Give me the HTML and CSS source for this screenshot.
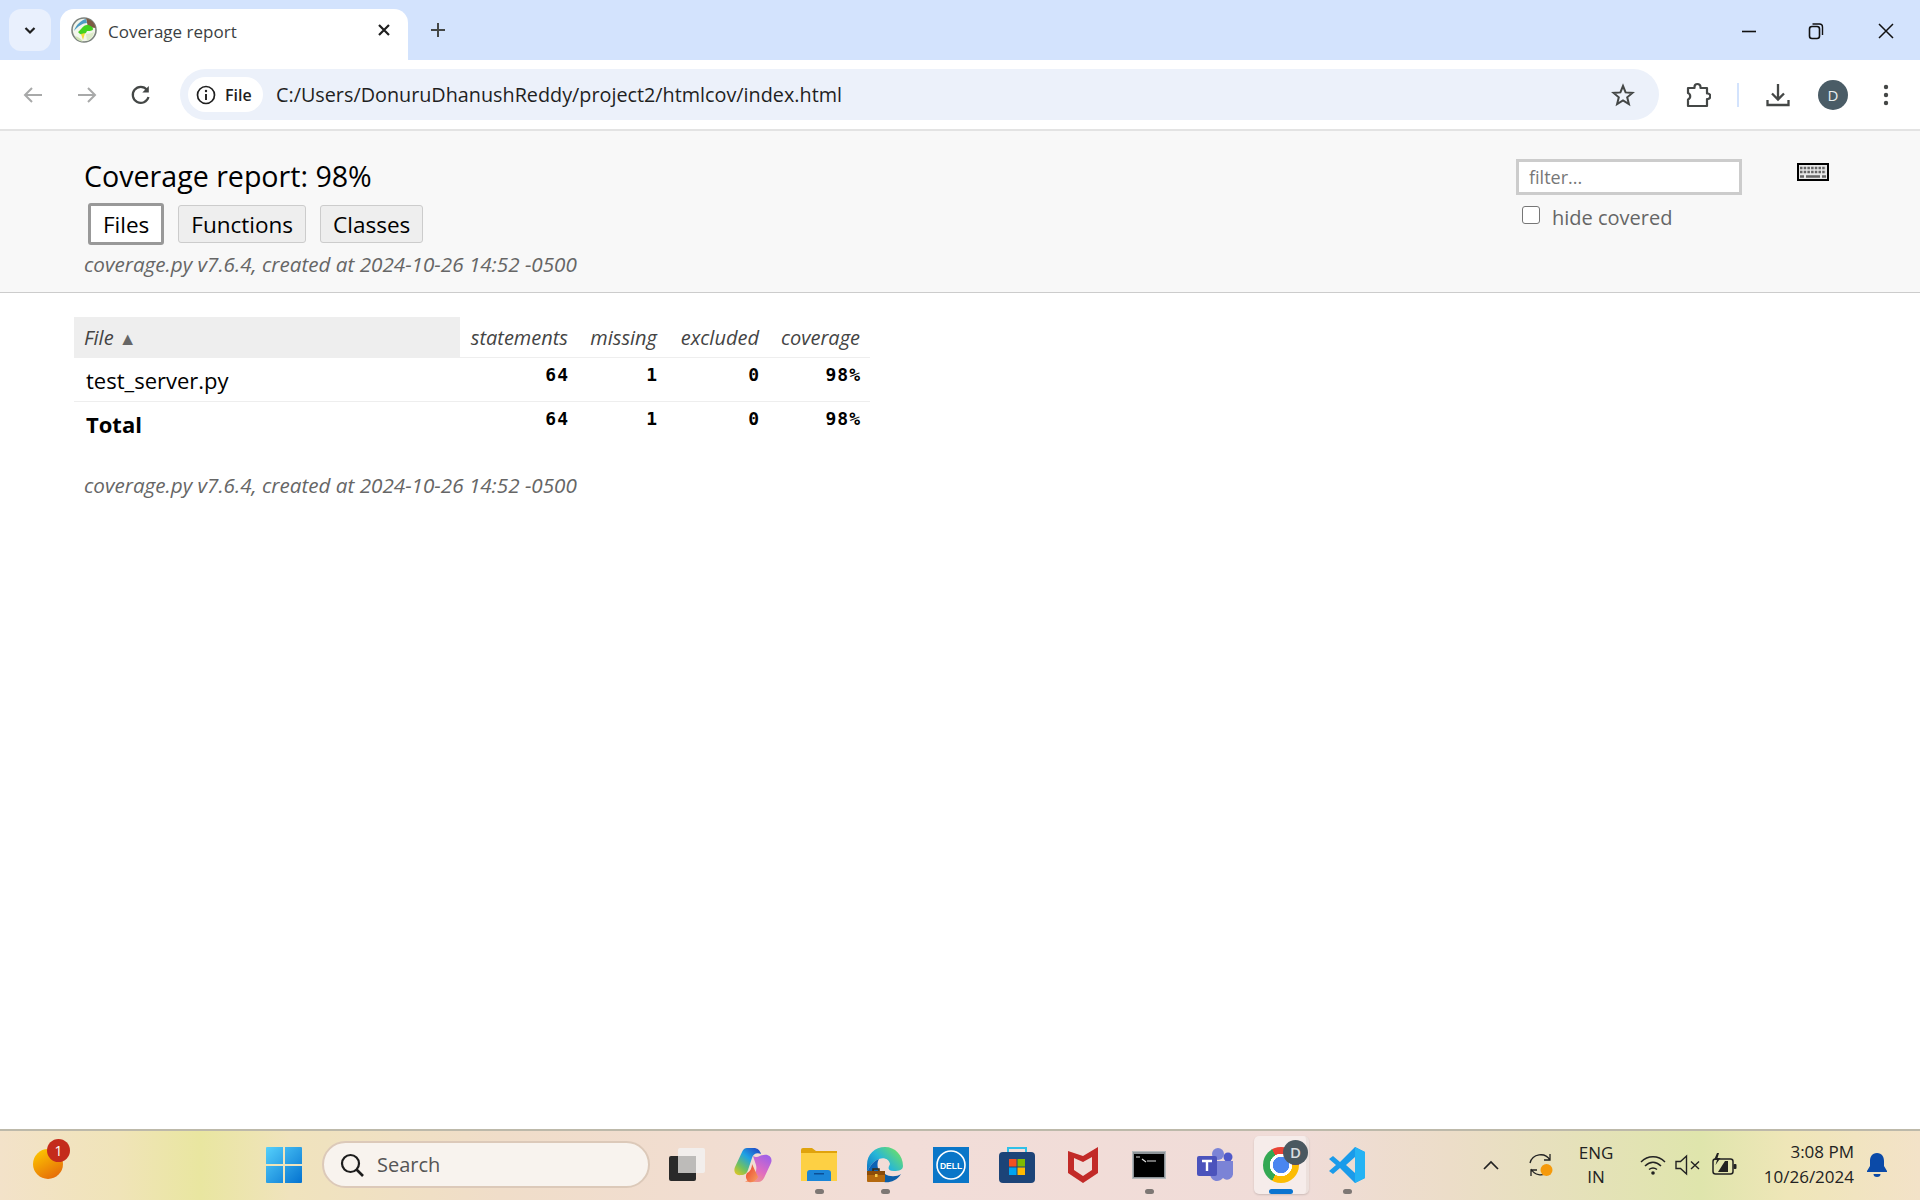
FILE: index.html
```html
<!DOCTYPE html>
<html lang="en">
<head>
    <meta charset="UTF-8">
    <meta name="viewport" content="width=device-width, initial-scale=1.0">
    <title>Coverage report</title>
    <link rel="stylesheet" href="styles.css">
</head>
<body>
    <!-- browser chrome -->
    <div class="tabstrip">
        <div class="tab-search">
            <svg width="14" height="14" viewBox="0 0 14 14"><path d="M2.5 5 L7 9.5 L11.5 5" fill="none" stroke="#1f1f1f" stroke-width="2.2"/></svg>
        </div>
        <div class="tab">
            <svg class="favicon" width="26" height="26" viewBox="0 0 26 26">
                <circle cx="13" cy="13" r="12" fill="#f3f6ec" stroke="#7c837e" stroke-width="1.600"/>
                <path d="M15 1.500 C20 2 24 6 24.500 11 L17 10Z" fill="#7d5a44"/>
                <path d="M3 14 C5 8 10 3 15 2 L16 6 C12 6 7 9 3 14Z" fill="#4f9cc4"/>
                <path d="M7 15 C10 13 12 8 16 8 C19 8 22 10 22 12 C22 14 18 14 16 14 C15 17 12 18 9 17Z" fill="#42d11f"/>
                <path d="M10 17 L14 16 L12 23Z" fill="#f0dc3c"/>
                <path d="M4 19 C8 20 10 22 12 24.500 C8 24.500 5 22 4 19Z" fill="#cfe3b4"/>
                <path d="M15 17 C18 17 21 16 23 15 C22 20 19 23 16 24Z" fill="#dcebc8"/>
            </svg>
            <span class="tab-title">Coverage report</span>
            <svg class="tab-close" width="14" height="14" viewBox="0 0 14 14"><path d="M2 2 L12 12 M12 2 L2 12" stroke="#1f1f1f" stroke-width="2.200"/></svg>
        </div>
        <svg class="new-tab" width="18" height="18" viewBox="0 0 18 18"><path d="M9 2 V16 M2 9 H16" stroke="#444746" stroke-width="2"/></svg>
        <div class="window-controls">
            <svg width="16" height="16" viewBox="0 0 16 16"><path d="M1 8.500 H15" stroke="#111" stroke-width="1.600"/></svg>
            <svg width="16" height="18" viewBox="0 0 16 18"><rect x="1.500" y="4.500" width="10" height="12" rx="2.500" fill="none" stroke="#111" stroke-width="1.600"/><path d="M4.500 2 H11.500 Q14.500 2 14.500 5 V13" fill="none" stroke="#111" stroke-width="1.400"/></svg>
            <svg class="win-close" width="18" height="18" viewBox="0 0 18 18"><path d="M2 2 L16 16 M16 2 L2 16" stroke="#111" stroke-width="1.500"/></svg>
        </div>
    </div>

    <div class="toolbar">
        <div class="nav-btn">
            <svg width="22" height="22" viewBox="0 0 22 22"><path d="M20 11 H3 M10 4 L3 11 L10 18" fill="none" stroke="#a8a9a9" stroke-width="2"/></svg>
        </div>
        <div class="nav-btn">
            <svg width="22" height="22" viewBox="0 0 22 22"><path d="M2 11 H19 M12 4 L19 11 L12 18" fill="none" stroke="#a8a9a9" stroke-width="2"/></svg>
        </div>
        <div class="nav-btn">
            <svg width="22" height="22" viewBox="0 0 22 22"><path d="M18.500 13 A8 8 0 1 1 17 5.800" fill="none" stroke="#444746" stroke-width="2.200"/><path d="M18.800 2 V8.500 H12.300Z" fill="#444746"/></svg>
        </div>
        <div class="omnibox">
            <div class="chip">
                <svg width="20" height="20" viewBox="0 0 20 20"><circle cx="10" cy="10" r="8.500" fill="none" stroke="#1f1f1f" stroke-width="1.700"/><path d="M10 9 V15" stroke="#1f1f1f" stroke-width="1.900"/><circle cx="10" cy="6" r="1.200" fill="#1f1f1f"/></svg>
                <span>File</span>
            </div>
            <span class="url">C:/Users/DonuruDhanushReddy/project2/htmlcov/index.html</span>
            <svg class="star" width="24" height="24" viewBox="0 0 24 24"><path d="M12 3 L14.600 9.400 L21.500 9.900 L16.200 14.300 L17.900 21 L12 17.400 L6.100 21 L7.800 14.300 L2.500 9.900 L9.400 9.400Z" fill="none" stroke="#444746" stroke-width="2"/></svg>
        </div>
        <div class="toolbar-icons">
            <svg width="26" height="26" viewBox="0 0 26 26"><path d="M3 6 H9.500 V5 A3 3 0 0 1 15.500 5 V6 H22 V11.500 H23 A2.800 2.800 0 0 1 23 17 H22 V24 H3 V17.500 A3.500 3.500 0 0 0 3 11Z" fill="none" stroke="#444746" stroke-width="2.200" stroke-linejoin="round"/></svg>
            <span class="divider"></span>
            <svg width="26" height="26" viewBox="0 0 26 26"><path d="M13 2 V17 M7 11.500 L13 17.500 L19 11.500" fill="none" stroke="#444746" stroke-width="2.300"/><path d="M2.500 18 V23 H23.500 V18" fill="none" stroke="#444746" stroke-width="2.300"/></svg>
            <div class="avatar">D</div>
            <svg width="6" height="24" viewBox="0 0 6 24"><circle cx="3" cy="4" r="2.200" fill="#444746"/><circle cx="3" cy="12" r="2.200" fill="#444746"/><circle cx="3" cy="20" r="2.200" fill="#444746"/></svg>
        </div>
    </div>

    <!-- coverage report -->
    <header class="report-header">
        <div class="header-left">
            <h1>Coverage report: <span>98%</span></h1>
            <nav class="report-nav">
                <a class="nav-link current">Files</a>
                <a class="nav-link">Functions</a>
                <a class="nav-link">Classes</a>
            </nav>
            <p class="byline">coverage.py v7.6.4, created at 2024-10-26 14:52 -0500</p>
        </div>
        <div class="filter-box">
            <input class="filter" type="text" placeholder="filter...">
            <label class="hide-covered"><input type="checkbox"><span>hide covered</span></label>
        </div>
        <svg class="keyboard" width="32" height="18" viewBox="0 0 32 18">
            <rect x="1" y="1" width="30" height="16" fill="#e8e8e8" stroke="#000" stroke-width="2"/>
            <path d="M3 5 H29" stroke="#666" stroke-width="2.500" stroke-dasharray="2.500 1.200"/>
            <path d="M3 9 H29" stroke="#666" stroke-width="2.500" stroke-dasharray="2.500 1.200"/>
            <path d="M3 13.500 H7 M9 13.500 H23 M25 13.500 H29" stroke="#666" stroke-width="2.500"/>
        </svg>
    </header>

    <main class="report-body">
        <table class="index">
            <thead>
                <tr>
                    <th class="name sorted">File <span class="arrow">▲</span></th>
                    <th>statements</th>
                    <th>missing</th>
                    <th>excluded</th>
                    <th>coverage</th>
                </tr>
            </thead>
            <tbody>
                <tr>
                    <td class="name">test_server.py</td>
                    <td class="num">64</td>
                    <td class="num">1</td>
                    <td class="num">0</td>
                    <td class="num">98%</td>
                </tr>
            </tbody>
            <tfoot>
                <tr>
                    <td class="name">Total</td>
                    <td class="num">64</td>
                    <td class="num">1</td>
                    <td class="num">0</td>
                    <td class="num">98%</td>
                </tr>
            </tfoot>
        </table>
        <p class="byline footer-line">coverage.py v7.6.4, created at 2024-10-26 14:52 -0500</p>
    </main>

    <!-- windows taskbar -->
    <footer class="taskbar">
        <div class="widget">
            <span class="widget-blob"></span>
            <span class="widget-badge">1</span>
        </div>
        <div class="start">
            <svg width="36" height="36" viewBox="0 0 36 36">
                <defs>
                    <linearGradient id="win" x1="0" y1="0" x2="1" y2="1"><stop offset="0" stop-color="#55d0fb"/><stop offset="1" stop-color="#0472d0"/></linearGradient>
                </defs>
                <path d="M0 1 Q0 0 1 0 H17 V17 H0Z M19 0 H35 Q36 0 36 1 V17 H19Z M0 19 H17 V36 H1 Q0 36 0 35Z M19 19 H36 V35 Q36 36 35 36 H19Z" fill="url(#win)"/>
            </svg>
        </div>
        <div class="search">
            <svg width="26" height="26" viewBox="0 0 26 26"><circle cx="11.500" cy="11.500" r="8.500" fill="none" stroke="#1c1c1c" stroke-width="2.200"/><path d="M17.500 17.500 L24 24" stroke="#1c1c1c" stroke-width="2.600"/></svg>
            <span>Search</span>
        </div>
        <div class="apps">
            <div class="app">
                <svg width="36" height="36" viewBox="0 0 36 36"><rect x="0" y="9" width="27" height="25" rx="2" fill="#2a2a2a"/><rect x="9" y="1" width="27" height="25" rx="2" fill="#f2efee" fill-opacity="0.900"/><rect x="9" y="9" width="18" height="17" fill="#bdbbb9"/></svg>
            </div>
            <div class="app">
                <svg width="38" height="36" viewBox="0 0 38 36">
                    <defs>
                        <linearGradient id="cop1" x1="0" y1="1" x2="0.800" y2="0"><stop offset="0" stop-color="#f2c71c"/><stop offset="0.300" stop-color="#74c25c"/><stop offset="0.650" stop-color="#1ea2e4"/><stop offset="1" stop-color="#2050c8"/></linearGradient>
                        <linearGradient id="cop2" x1="0.800" y1="0" x2="0.200" y2="1"><stop offset="0" stop-color="#a060e8"/><stop offset="0.550" stop-color="#e06cc0"/><stop offset="1" stop-color="#f5a07a"/></linearGradient>
                        <linearGradient id="cop3" x1="0" y1="0" x2="1" y2="1"><stop offset="0" stop-color="#e8402c"/><stop offset="1" stop-color="#f8a060"/></linearGradient>
                    </defs>
                    <path d="M13 1 C11 1 9.500 2 8.500 4 L1 20 C-1 25 2 29 7 28 C11 28 13 26 14 23 L18 11 C19 7 23 5 27 7 C26 3 23 1 20 1Z" fill="url(#cop1)"/>
                    <path d="M19 9 L22 18 C23 22 22 26 19 29 L11 35 H24 C27 35 29 33 30 31 L37 16 C39 11 35 7 30 8 C25 8 24 12 19 9Z" fill="url(#cop2)"/>
                    <path d="M13 26 C16 25 18 21 18 17 L24 30 C22 34 18 36 15 35 C12 33 11 29 13 26Z" fill="url(#cop3)"/>
                </svg>
            </div>
            <div class="app running">
                <svg width="36" height="34" viewBox="0 0 36 34"><path d="M0 2 Q0 0 2 0 H11 L15 3 H36 V33 H0Z" fill="#e0a30c"/><rect x="0" y="5" width="36" height="28" fill="#fdd044"/><path d="M6 33 V25 Q6 22 9 22 H27 Q30 22 30 25 V33Z" fill="#1b86d8"/><rect x="13" y="25" width="10" height="1.500" fill="#0b4f96"/></svg>
            </div>
            <div class="app running">
                <svg width="36" height="36" viewBox="0 0 36 36">
                    <defs>
                        <linearGradient id="edge" x1="0" y1="1" x2="1" y2="0.300"><stop offset="0" stop-color="#0c70c4"/><stop offset="0.500" stop-color="#27b6d8"/><stop offset="1" stop-color="#6ade6a"/></linearGradient>
                    </defs>
                    <path d="M0 18 C0 7 8 0 18 0 C28 0 36 8 36 19 C36 23 32 24 27 24 C19 24 22 19 23 17 C22 12 17 10 12 12 C7 14 4 17 0 25Z" fill="url(#edge)"/>
                    <path d="M0 25 C4 17 7 14 12 12 C10 15 10 20 12 24 H0Z" fill="#0c62b4"/>
                    <path d="M18 27 C22 30 30 30 34 27 C30 34 22 36 17 35Z" fill="#0c5ea8"/>
                    <rect x="0" y="24" width="18" height="11" rx="1" fill="#b5690f"/>
                    <rect x="0" y="24" width="18" height="4" fill="#8b4c0a"/>
                    <path d="M6 24 V22 H12 V24" fill="none" stroke="#3a2a12" stroke-width="1.500"/>
                    <rect x="8" y="27" width="2.500" height="3" fill="#f7c948"/>
                </svg>
            </div>
            <div class="app">
                <svg width="36" height="36" viewBox="0 0 36 36"><rect width="36" height="36" fill="#0a76c8"/><circle cx="18" cy="18" r="14" fill="none" stroke="#fff" stroke-width="1.600"/><text class="dell-text" x="18" y="21.500" text-anchor="middle">DELL</text></svg>
            </div>
            <div class="app">
                <svg width="36" height="36" viewBox="0 0 36 36"><path d="M9 5 V1 H27 V5" fill="none" stroke="#2fc0e8" stroke-width="2"/><rect y="5" width="36" height="31" rx="4" fill="#1c4478"/><rect x="10" y="12" width="7.500" height="7.500" fill="#f25022"/><rect x="18.500" y="12" width="7.500" height="7.500" fill="#7fba00"/><rect x="10" y="20.500" width="7.500" height="7.500" fill="#00a4ef"/><rect x="18.500" y="20.500" width="7.500" height="7.500" fill="#ffb900"/></svg>
            </div>
            <div class="app">
                <svg width="30" height="36" viewBox="0 0 30 36"><path fill-rule="evenodd" d="M0 4 L15 9 L30 0 V26 L15 36 L0 26Z M6 11 V23 L15 29 L24 23 V10 L15 15Z" fill="#c22a28"/></svg>
            </div>
            <div class="app running">
                <svg width="34" height="28" viewBox="0 0 34 28"><rect x="0.500" y="0.500" width="33" height="27" fill="#8d9398" stroke="#b5b8ba"/><rect x="2" y="3" width="30" height="23" fill="#000"/><path d="M4 6 H8 M10 8 L14 11 M15 10 H24" stroke="#ddd" stroke-width="1.200"/></svg>
            </div>
            <div class="app">
                <svg width="36" height="34" viewBox="0 0 36 34"><circle cx="21" cy="6" r="6" fill="#7b83d6"/><circle cx="31" cy="9" r="4.500" fill="#5059c9"/><path d="M13 13 H36 V25 A6 6 0 0 1 26 30 C22 35 14 34 13 26Z" fill="#7b83d6"/><rect y="8" width="20" height="20" rx="2" fill="#4b53bc"/><path d="M5 13 H15 M10 13 V23" stroke="#fff" stroke-width="2.400"/></svg>
            </div>
            <div class="app active">
                <div class="chrome-logo"></div>
                <span class="chrome-badge">D</span>
            </div>
            <div class="app running">
                <svg width="36" height="36" viewBox="0 0 36 36"><path d="M26 0 L36 5 V31 L26 36 L11 21 L4 27 L0 24 L7 18 L0 12 L4 9 L11 15Z M26 10 L17 18 L26 26Z" fill-rule="evenodd" fill="#1a9bea"/><path d="M26 0 L36 5 V31 L26 36Z M26 10 V26" fill="#25b3f4"/></svg>
            </div>
        </div>
        <div class="tray">
            <svg class="tray-chevron" width="16" height="10" viewBox="0 0 16 10"><path d="M1 9 L8 2 L15 9" fill="none" stroke="#222" stroke-width="1.700"/></svg>
            <svg class="tray-sync" width="26" height="26" viewBox="0 0 26 26"><path d="M2 11 A11 11 0 0 1 22 8 M22 2 V8 H16" fill="none" stroke="#222" stroke-width="1.300"/><path d="M20 20 A11 11 0 0 1 3 17 M3 24 V18 H9" fill="none" stroke="#222" stroke-width="1.300"/><circle cx="18.500" cy="18" r="6" fill="#f59a0c"/></svg>
            <div class="lang">ENG<br>IN</div>
            <svg class="tray-wifi" width="26" height="22" viewBox="0 0 26 22"><path d="M1 8 C8 1 18 1 25 8 M5 12 C10 7 16 7 21 12 M9 15.500 C11.500 13.500 14.500 13.500 17 15.500" fill="none" stroke="#222" stroke-width="1.500"/><circle cx="13" cy="19" r="1.800" fill="#222"/></svg>
            <svg class="tray-sound" width="26" height="22" viewBox="0 0 26 22"><path d="M1 7.500 H5.500 L11.500 2 V20 L5.500 14.500 H1Z" fill="none" stroke="#222" stroke-width="1.400"/><path d="M16 7.500 L24 15 M24 7.500 L16 15" stroke="#222" stroke-width="1.400"/></svg>
            <svg class="tray-battery" width="26" height="24" viewBox="0 0 26 24"><rect x="1" y="6" width="20" height="15" rx="2.500" fill="none" stroke="#222" stroke-width="1.500"/><rect x="21.500" y="11" width="3" height="5" rx="1" fill="#222"/><path d="M6 19 L13 8 H16 V19Z" fill="#222"/><path d="M5 0 L2 7 H5 L3.500 12 L8.500 5 H5.500 L7 0Z" fill="#222"/></svg>
            <div class="clock">
                <div>3:08 PM</div>
                <div>10/26/2024</div>
            </div>
            <svg class="tray-bell" width="22" height="24" viewBox="0 0 22 24"><path d="M11 0 C16 0 18 4 18 8 V13 L21 18 V19 H1 V18 L4 13 V8 C4 4 6 0 11 0Z" fill="#0b4aa8"/><path d="M7.500 21 H14.500 A3.500 3 0 0 1 7.500 21Z" fill="#0b4aa8"/></svg>
        </div>
    </footer>
</body>
</html>
```

FILE: styles.css
```css
* {
    box-sizing: border-box;
}

html, body {
    height: 100%;
}

body {
    margin: 0;
    display: flex;
    flex-direction: column;
    height: 1200px;
    overflow: hidden;
    background-color: white;
    color: black;
    font-family: "Open Sans", "Noto Sans", sans-serif;
}

/* tab strip */
.tabstrip {
    height: 60px;
    flex: none;
    display: flex;
    align-items: flex-end;
    background-color: #d3e3fd;
}

.tab-search {
    width: 42px;
    height: 42px;
    margin: 0 9px 9px 9px;
    border-radius: 12px;
    background-color: #e9f0fd;
    display: flex;
    align-items: center;
    justify-content: center;
}

.tab {
    width: 348px;
    height: 51px;
    display: flex;
    align-items: center;
    padding: 0 17px 9px 11px;
    border-radius: 14px 14px 0 0;
    background-color: white;
}

.tab-title {
    margin: 2px 0 0 11px;
    font-size: 17px;
    color: #3c3f43;
}

.tab-close {
    margin-left: auto;
}

.new-tab {
    margin: 0 0 21px 21px;
}

.window-controls {
    margin: 0 25px 20px auto;
    display: flex;
    align-items: center;
    gap: 51px;
}

.win-close {
    margin-left: 2px;
}

/* toolbar */
.toolbar {
    height: 71px;
    flex: none;
    display: flex;
    align-items: center;
    padding: 0 22px 0 22px;
    gap: 32px;
    border-bottom: 2px solid #e3e3e3;
    background-color: white;
}

.nav-btn {
    width: 22px;
    height: 22px;
}

.omnibox {
    width: 1479px;
    height: 51px;
    flex: none;
    margin-left: -4px;
    padding: 0 24px 0 8px;
    display: flex;
    align-items: center;
    border-radius: 26px;
    background-color: #ecf1fa;
}

.chip {
    width: 75px;
    height: 35px;
    display: flex;
    align-items: center;
    gap: 9px;
    padding-left: 8px;
    border-radius: 18px;
    background-color: white;
    font-size: 16px;
    font-weight: 600;
    color: #1f1f1f;
}

.url {
    margin-left: 13px;
    font-size: 19.800px;
    color: #1f1f1f;
}

.star {
    margin-left: auto;
}

.toolbar-icons {
    display: flex;
    align-items: center;
    margin-left: -6px;
}

.divider {
    width: 2px;
    height: 24px;
    margin: 0 26px 0 26px;
    background-color: #d3e3fd;
}

.avatar {
    width: 30px;
    height: 30px;
    margin: 0 35px 0 27px;
    border-radius: 50%;
    background-color: #4a5c66;
    color: #e8eef0;
    font-size: 15px;
    text-align: center;
    line-height: 30px;
}

/* report */
.report-header {
    height: 162px;
    flex: none;
    display: flex;
    align-items: flex-start;
    padding: 0 0 0 84px;
    border-bottom: 1px solid #ccc;
    background-color: #f8f8f8;
}

.header-left {
    flex: 1;
}

h1 {
    margin: 26px 0 0 0;
    font-size: 28.600px;
    font-weight: 400;
    line-height: 38px;
}

.report-nav {
    display: flex;
    align-items: center;
    gap: 14px;
    margin: 8px 0 0 4px;
}

.nav-link {
    height: 38px;
    padding: 0 12px;
    display: flex;
    align-items: center;
    border: 1px solid #ccc;
    border-radius: 3px;
    background-color: #eee;
    font-size: 22.500px;
}

.nav-link.current {
    height: 42px;
    padding: 0 12px;
    border: 3px solid #999;
    background-color: white;
}

.byline {
    margin: 4px 0 0 0;
    font-size: 20.650px;
    font-style: italic;
    line-height: 30px;
    color: #666;
}

.filter-box {
    width: 226px;
    margin-top: 28px;
}

.filter {
    width: 226px;
    height: 36px;
    display: block;
    padding: 0 10px;
    border: 3px solid #ccc;
    background-color: white;
    font-family: "Open Sans", sans-serif;
    font-size: 18px;
}

.filter::placeholder {
    color: #777;
}

.hide-covered {
    display: flex;
    align-items: center;
    margin: 9px 0 0 6px;
    font-size: 20px;
    color: #666;
}

.hide-covered input {
    width: 18px;
    height: 18px;
    margin: -6px 12px 0 0;
    appearance: none;
    border: 1.500px solid #767676;
    border-radius: 3px;
    background-color: white;
}

.keyboard {
    margin: 32px 91px 0 55px;
}

.report-body {
    flex: 1;
    padding: 24px 0 0 74px;
}

.index {
    width: 796px;
    border-collapse: collapse;
    table-layout: fixed;
}

.index th {
    height: 40px;
    padding: 2px 10px 0 0;
    border-bottom: 1px solid #eee;
    font-size: 20px;
    font-style: italic;
    font-weight: 400;
    text-align: right;
    color: #444;
}

.index th:nth-child(1) { width: 386px; }
.index th:nth-child(2) { width: 118px; }
.index th:nth-child(3) { width: 89px; }
.index th:nth-child(4) { width: 102px; }
.index th:nth-child(5) { width: 101px; }

.index th.name {
    padding-left: 10px;
    background-color: #eee;
    text-align: left;
}

.arrow {
    font-size: 18px;
    font-style: normal;
    color: #666;
}

.index td {
    height: 44px;
    padding: 0 10px 0 0;
    border-bottom: 1px solid #eee;
}

.index td.name {
    padding: 2px 0 0 12px;
    font-size: 22px;
}

.index td.num {
    padding: 0 9px 9px 0;
    font-family: "DejaVu Sans Mono", monospace;
    font-size: 18px;
    letter-spacing: 1px;
    font-weight: 700;
    text-align: right;
}

.index tfoot td {
    border-bottom: none;
}

.index tfoot td.name {
    font-weight: 700;
}

.footer-line {
    margin: 25px 0 0 10px;
}

/* taskbar */
.taskbar {
    height: 71px;
    flex: none;
    display: flex;
    align-items: center;
    padding-bottom: 2px;
    border-top: 2px solid #bdb9aa;
    background: linear-gradient(90deg, #f3e2c9 0, #f0e4b8 120px, #e9e6a0 200px, #f0e3bd 290px, #f0ddc9 500px, #f2ddd8 900px, #f0dcd8 1300px, #ecddc8 1450px, #dfe5ac 1700px, #efe6b8 1790px, #f3e2c8 1920px);
}

.widget {
    width: 266px;
    height: 100%;
    flex: none;
    position: relative;
}

.widget-blob {
    position: absolute;
    left: 33px;
    top: 18px;
    width: 30px;
    height: 30px;
    border-radius: 50%;
    background: linear-gradient(150deg, #ffcf00, #e25f0a);
}

.widget-badge {
    position: absolute;
    left: 47px;
    top: 8px;
    width: 23px;
    height: 23px;
    border-radius: 50%;
    background-color: #c42b1c;
    color: white;
    font-size: 14px;
    line-height: 23px;
    text-align: center;
}

.start {
    width: 36px;
    height: 36px;
    margin-right: 20px;
    flex: none;
}

.search {
    width: 328px;
    height: 47px;
    flex: none;
    display: flex;
    align-items: center;
    gap: 12px;
    padding-left: 15px;
    border: 2px solid #dcc9b9;
    border-radius: 24px;
    background-color: #f8f3ee;
    font-size: 20px;
    color: #555;
}

.apps {
    display: flex;
    margin-left: 4px;
    height: 100%;
}

.app {
    width: 66px;
    height: 100%;
    position: relative;
    display: flex;
    align-items: center;
    justify-content: center;
}

.app.running::after {
    content: "";
    position: absolute;
    left: 29px;
    bottom: 4px;
    width: 9px;
    height: 5px;
    border-radius: 3px;
    background-color: #7d7774;
}

.app.active::before {
    content: "";
    position: absolute;
    left: 6px;
    top: 5px;
    width: 52px;
    height: 58px;
    border-radius: 5px;
    border-right: 3px solid #ece0dc;
    background-color: #f6ecea;
    box-shadow: 0 1px 2px rgba(0, 0, 0, 0.15);
}

.app.active::after {
    content: "";
    position: absolute;
    left: 21px;
    bottom: 4px;
    width: 24px;
    height: 5px;
    border-radius: 3px;
    background-color: #0a74d0;
}

.chrome-logo {
    width: 36px;
    height: 36px;
    position: relative;
    border-radius: 50%;
    background:
        radial-gradient(circle, #4a86f0 0 8px, white 8.500px 11px, transparent 11.500px),
        conic-gradient(#ea4335 0 90deg, #fbbc04 90deg 210deg, #34a853 210deg 330deg, #ea4335 330deg);
}

.chrome-badge {
    position: absolute;
    left: 35px;
    top: 9px;
    width: 25px;
    height: 25px;
    border-radius: 50%;
    background-color: #4a5860;
    color: #d8dee0;
    font-size: 15px;
    font-weight: 600;
    line-height: 25px;
    text-align: center;
}

.dell-text {
    font-family: "Liberation Sans", sans-serif;
    font-size: 8.500px;
    font-weight: 700;
    fill: white;
}

.tray {
    display: flex;
    align-items: center;
    flex: 1;
    height: 100%;
    margin-left: 103px;
}

.tray-sync {
    margin-left: 29px;
}

.lang {
    width: 40px;
    margin-left: 22px;
    font-size: 17px;
    line-height: 24px;
    text-align: center;
    color: #222;
}

.tray-wifi {
    margin-left: 24px;
}

.tray-sound {
    margin-left: 9px;
}

.tray-battery {
    margin-left: 11px;
}

.clock {
    width: 110px;
    margin: -2px 0 0 6px;
    font-size: 17px;
    line-height: 25px;
    text-align: right;
    color: #222;
}

.tray-bell {
    margin-left: 12px;
}
```
